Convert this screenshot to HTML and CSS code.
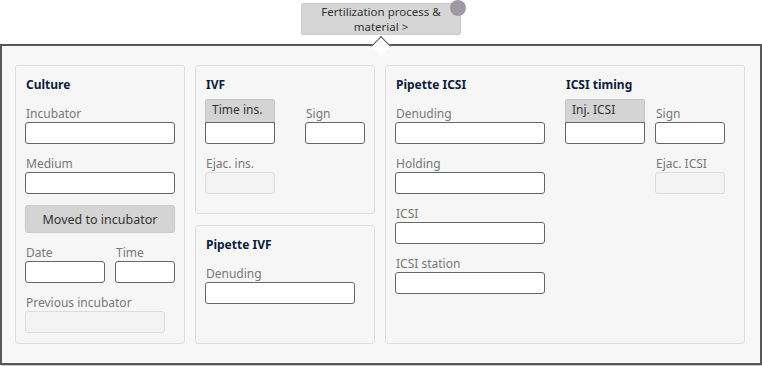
FILE: index.html
```html
<!DOCTYPE html>
<html>
<head>
<meta charset="utf-8">
<link rel="stylesheet" href="styles.css">
</head>
<body>
<div class="top">
  <div class="trigger-wrap">
    <button class="trigger"><span class="tl">Fertilization process &amp;</span><span class="tl">material &gt;</span></button>
    <span class="dot"></span>
  </div>
</div>
<div class="panel">
  <span class="notch"></span>
  <div class="grid">
    <section class="card">
      <div class="card-title">Culture</div>
      <div class="field"><label>Incubator</label><div class="input w150"></div></div>
      <div class="field"><label>Medium</label><div class="input w150"></div></div>
      <button class="action">Moved to incubator</button>
      <div class="row">
        <div class="field"><label>Date</label><div class="input w80"></div></div>
        <div class="field"><label>Time</label><div class="input w60"></div></div>
      </div>
      <div class="field"><label>Previous incubator</label><div class="input disabled w140"></div></div>
    </section>

    <div class="mid">
      <section class="card ivf">
        <div class="card-title tight">IVF</div>
        <div class="row end g30">
          <div class="timed w70"><div class="timed-head">Time ins.</div><div class="input"></div></div>
          <div class="field nogap"><label>Sign</label><div class="input w60"></div></div>
        </div>
        <div class="field"><label>Ejac. ins.</label><div class="input disabled w70"></div></div>
      </section>
      <section class="card grow">
        <div class="card-title">Pipette IVF</div>
        <div class="field"><label>Denuding</label><div class="input w150"></div></div>
      </section>
    </div>

    <section class="card split">
      <div class="col">
        <div class="card-title">Pipette ICSI</div>
        <div class="field"><label>Denuding</label><div class="input w150"></div></div>
        <div class="field"><label>Holding</label><div class="input w150"></div></div>
        <div class="field"><label>ICSI</label><div class="input w150"></div></div>
        <div class="field"><label>ICSI station</label><div class="input w150"></div></div>
      </div>
      <div class="col">
        <div class="card-title tight">ICSI timing</div>
        <div class="row end">
          <div class="timed w80"><div class="timed-head">Inj. ICSI</div><div class="input"></div></div>
          <div class="field nogap"><label>Sign</label><div class="input w70"></div></div>
        </div>
        <div class="field push"><label>Ejac. ICSI</label><div class="input disabled w70"></div></div>
      </div>
    </section>
  </div>
</div>
</body>
</html>
```
FILE: styles.css
```css
* { box-sizing: border-box; }
html, body { margin: 0; padding: 0; background: #ffffff; }
body {
  width: 762px;
  height: 366px;
  overflow: hidden;
  font-family: "Noto Sans", "Open Sans", sans-serif;
  font-size: 12px;
  color: #333;
}
.top {
  display: flex;
  justify-content: center;
  padding-top: 3px;
  height: 44px;
}
.trigger-wrap { position: relative; }
.trigger {
  width: 160px;
  height: 32px;
  margin: 0;
  padding: 0;
  border: 1px solid #c9c9c9;
  border-radius: 2px;
  background: #d6d6d6;
  font-family: inherit;
  font-size: 11.5px;
  color: #333;
  display: flex;
  flex-direction: column;
  align-items: center;
  justify-content: center;
}
.tl { display: block; line-height: 15px; height: 15px; }
.dot {
  position: absolute;
  right: -5px;
  top: -3px;
  width: 16px;
  height: 16px;
  border-radius: 50%;
  background: #9e9aa4;
}
.panel {
  position: relative;
  height: 321px;
  border: 2px solid #575757;
  background: #f8f8f8;
  padding: 19px 0 0 13px;
  box-shadow: 1px 1px 2px rgba(0,0,0,0.3);
}
.notch {
  position: absolute;
  left: calc(50% - 7px);
  top: -7px;
  width: 14px;
  height: 14px;
  background: #ffffff;
  border-top: 1px solid #575757;
  border-left: 1px solid #575757;
  transform: rotate(45deg);
}
.grid {
  display: grid;
  grid-template-columns: 170px 180px 360px;
  grid-template-rows: 279px;
  column-gap: 10px;
}
.card {
  background: #f6f6f6;
  border: 1px solid #dedede;
  border-radius: 3px;
  padding: 9px 9px 10px;
  display: flex;
  flex-direction: column;
  gap: 12px;
}
.card-title {
  height: 20px;
  line-height: 20px;
  font-weight: 700;
  font-size: 12px;
  color: #0b1d3d;
  margin-bottom: -1px;
  padding-left: 1px;
}
.card-title.tight { margin-bottom: -8px; }
.mid {
  display: flex;
  flex-direction: column;
  gap: 11px;
}
.ivf { padding-bottom: 19px; }
.grow { flex: 1; }
.field {
  display: flex;
  flex-direction: column;
}
.field label {
  height: 16px;
  line-height: 16px;
  color: #777;
  padding-left: 1px;
}
.input {
  height: 22px;
  background: #fff;
  border: 1px solid #666;
  border-radius: 3px;
}
.input.disabled {
  background: #f3f3f3;
  border-color: #dddddd;
}
.w150 { width: 150px; }
.w140 { width: 140px; }
.w80 { width: 80px; }
.w70 { width: 70px; }
.w60 { width: 60px; }
.row {
  display: flex;
  gap: 10px;
}
.row.end { align-items: flex-end; }
.row.g30 { gap: 30px; }
.action {
  width: 150px;
  height: 29px;
  margin: -1px 0 0;
  padding: 0;
  border: 1px solid #cccccc;
  border-radius: 3px;
  background: #d4d4d4;
  font-family: inherit;
  font-size: 12.5px;
  color: #333;
}
.timed { display: flex; flex-direction: column; }
.timed-head {
  height: 23px;
  background: #d4d4d4;
  border: 1px solid #c4c4c4;
  border-bottom: none;
  border-radius: 3px 3px 0 0;
  padding: 2px 0 0 6px;
  line-height: 16px;
  color: #333;
}
.timed .input { border-radius: 0 0 3px 3px; }
.split {
  flex-direction: row;
  gap: 20px;
}
.col {
  display: flex;
  flex-direction: column;
  gap: 12px;
}
.push { align-self: flex-end; }
```
